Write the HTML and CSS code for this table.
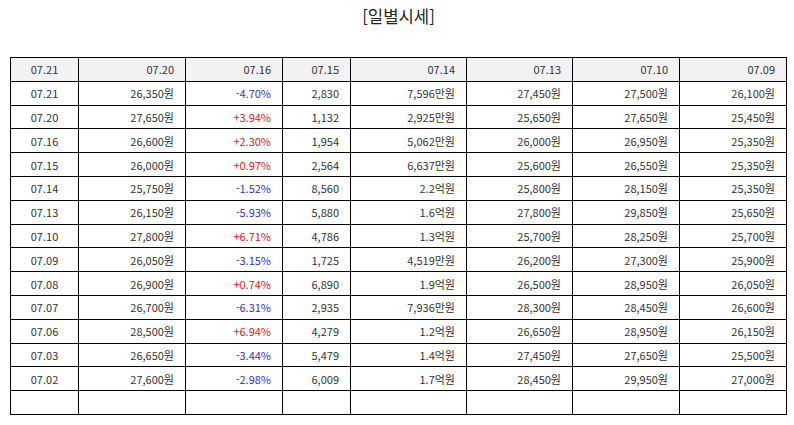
FILE: index.html
```html
<!DOCTYPE html>
<html lang="ko">
<head>
<meta charset="utf-8">
<link rel="stylesheet" href="styles.css">
</head>
<body>
<div class="page">
  <h1 class="title">[일별시세]</h1>
  <table class="daily">
    <colgroup>
      <col class="c1"><col class="c2"><col class="c3"><col class="c4"><col class="c5"><col class="c6"><col class="c7"><col class="c8">
    </colgroup>
    <thead>
      <tr><th class="center">07.21</th><th>07.20</th><th>07.16</th><th>07.15</th><th>07.14</th><th>07.13</th><th>07.10</th><th>07.09</th></tr>
    </thead>
    <tbody>
      <tr><td class="center">07.21</td><td>26,350원</td><td class="down">-4.70%</td><td>2,830</td><td>7,596만원</td><td>27,450원</td><td>27,500원</td><td>26,100원</td></tr>
      <tr><td class="center">07.20</td><td>27,650원</td><td class="up">+3.94%</td><td>1,132</td><td>2,925만원</td><td>25,650원</td><td>27,650원</td><td>25,450원</td></tr>
      <tr><td class="center">07.16</td><td>26,600원</td><td class="up">+2.30%</td><td>1,954</td><td>5,062만원</td><td>26,000원</td><td>26,950원</td><td>25,350원</td></tr>
      <tr><td class="center">07.15</td><td>26,000원</td><td class="up">+0.97%</td><td>2,564</td><td>6,637만원</td><td>25,600원</td><td>26,550원</td><td>25,350원</td></tr>
      <tr><td class="center">07.14</td><td>25,750원</td><td class="down">-1.52%</td><td>8,560</td><td>2.2억원</td><td>25,800원</td><td>28,150원</td><td>25,350원</td></tr>
      <tr><td class="center">07.13</td><td>26,150원</td><td class="down">-5.93%</td><td>5,880</td><td>1.6억원</td><td>27,800원</td><td>29,850원</td><td>25,650원</td></tr>
      <tr><td class="center">07.10</td><td>27,800원</td><td class="up">+6.71%</td><td>4,786</td><td>1.3억원</td><td>25,700원</td><td>28,250원</td><td>25,700원</td></tr>
      <tr><td class="center">07.09</td><td>26,050원</td><td class="down">-3.15%</td><td>1,725</td><td>4,519만원</td><td>26,200원</td><td>27,300원</td><td>25,900원</td></tr>
      <tr><td class="center">07.08</td><td>26,900원</td><td class="up">+0.74%</td><td>6,890</td><td>1.9억원</td><td>26,500원</td><td>28,950원</td><td>26,050원</td></tr>
      <tr><td class="center">07.07</td><td>26,700원</td><td class="down">-6.31%</td><td>2,935</td><td>7,936만원</td><td>28,300원</td><td>28,450원</td><td>26,600원</td></tr>
      <tr><td class="center">07.06</td><td>28,500원</td><td class="up">+6.94%</td><td>4,279</td><td>1.2억원</td><td>26,650원</td><td>28,950원</td><td>26,150원</td></tr>
      <tr><td class="center">07.03</td><td>26,650원</td><td class="down">-3.44%</td><td>5,479</td><td>1.4억원</td><td>27,450원</td><td>27,650원</td><td>25,500원</td></tr>
      <tr><td class="center">07.02</td><td>27,600원</td><td class="down">-2.98%</td><td>6,009</td><td>1.7억원</td><td>28,450원</td><td>29,950원</td><td>27,000원</td></tr>
      <tr class="empty"><td></td><td></td><td></td><td></td><td></td><td></td><td></td><td></td></tr>
    </tbody>
  </table>
</div>
</body>
</html>
```

FILE: styles.css
```css
html, body {
  margin: 0;
  padding: 0;
  background: #fff;
}
body {
  font-family: "Noto Sans CJK KR", "Noto Sans", sans-serif;
  color: #333;
}
.page {
  padding: 0 0 0 10px;
  width: 777px;
}
.title {
  margin: 0;
  height: 57px;
  box-sizing: border-box;
  padding-top: 5px;
  font-size: 16.7px;
  font-weight: normal;
  line-height: 22px;
  text-align: center;
  color: #222;
}
.daily {
  border-collapse: collapse;
  table-layout: fixed;
  width: 777px;
  font-size: 11px;
}
.c1 { width: 68px; }
.c2 { width: 107px; }
.c3 { width: 97px; }
.c4 { width: 68px; }
.c5 { width: 116px; }
.c6 { width: 106px; }
.c7 { width: 107px; }
.c8 { width: 107px; }
.daily th, .daily td {
  border: 1px solid #000;
  height: 23.8px;
  padding: 0 11px 0 4px;
  text-align: right;
  font-weight: normal;
  line-height: 14px;
  white-space: nowrap;
  box-sizing: border-box;
}
.daily thead th {
  background: #f2f2f2;
}
.daily .center {
  text-align: center;
  padding: 0;
}
.daily .up { color: #e02020; }
.daily .down { color: #3333c8; }
```
